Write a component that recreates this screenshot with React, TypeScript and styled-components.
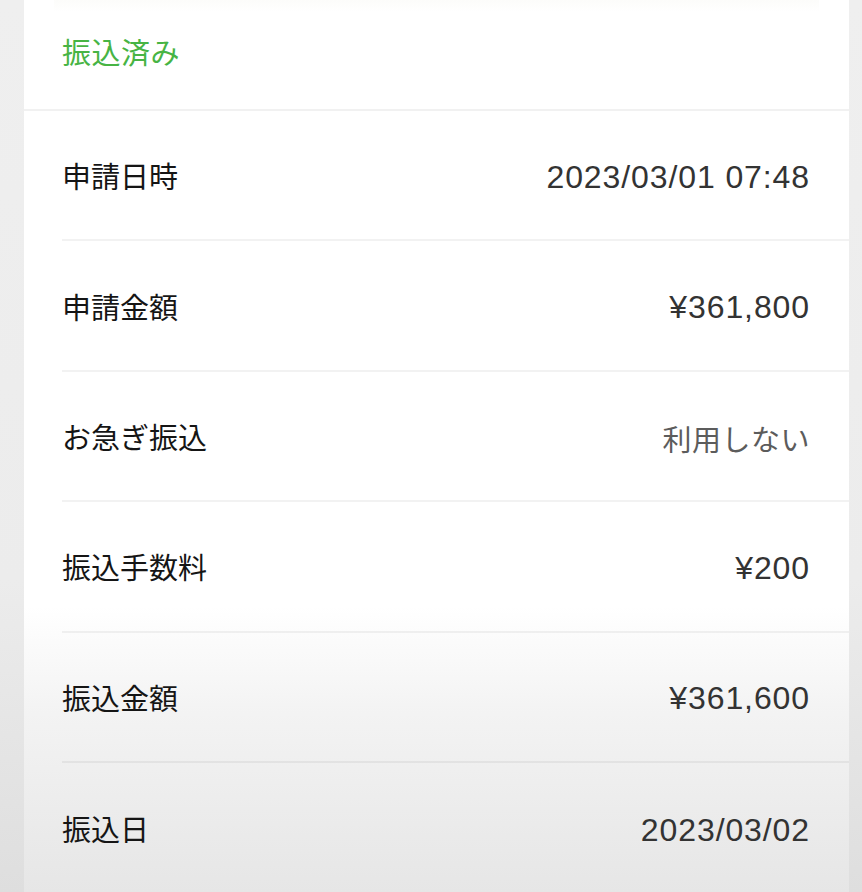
import styled, { createGlobalStyle } from 'styled-components';

const GlobalStyle = createGlobalStyle`
  html, body {
    margin: 0;
    padding: 0;
  }
  body {
    background: linear-gradient(to bottom, #efefef 0%, #ececec 65%, #dedede 100%);
    font-family: 'Noto Sans CJK JP', 'Noto Sans', sans-serif;
  }
`;

type Detail = {
  label: string;
  value: string;
  muted?: boolean;
};

const details: Detail[] = [
  { label: '申請日時', value: '2023/03/01 07:48' },
  { label: '申請金額', value: '¥361,800' },
  { label: 'お急ぎ振込', value: '利用しない', muted: true },
  { label: '振込手数料', value: '¥200' },
  { label: '振込金額', value: '¥361,600' },
  { label: '振込日', value: '2023/03/02' },
];

export default function App() {
  return (
    <>
      <GlobalStyle />
      <Page>
        <Card>
          <TopFade />
          <StatusRow>
            <Status>振込済み</Status>
          </StatusRow>
          <List>
            {details.map((item) => (
              <Row key={item.label}>
                <Label>{item.label}</Label>
                <Value $muted={item.muted}>{item.value}</Value>
              </Row>
            ))}
          </List>
        </Card>
      </Page>
    </>
  );
}

const Page = styled.div`
  width: 862px;
  height: 892px;
  overflow: hidden;
  padding-left: 24px;
  box-sizing: border-box;
`;

const Card = styled.div`
  width: 825px;
  height: 892px;
  background: linear-gradient(
    to bottom,
    #ffffff 0%,
    #ffffff 68%,
    #f3f3f3 80%,
    #e6e6e6 100%
  );
`;

const TopFade = styled.div`
  height: 12px;
  margin: 0 30px;
  background: linear-gradient(to bottom, #fcfcfa, #ffffff);
`;

const StatusRow = styled.div`
  height: 99px;
  display: flex;
  align-items: center;
  padding-left: 38px;
  padding-bottom: 20px;
  box-sizing: border-box;
  border-bottom: 2px solid #f1f1f1;
`;

const Status = styled.span`
  font-size: 29px;
  color: #47b444;
  letter-spacing: 0.5px;
`;

const List = styled.div`
  padding-left: 38px;
`;

const Row = styled.div`
  height: 130.4px;
  display: flex;
  align-items: center;
  justify-content: space-between;
  padding-right: 39px;
  border-bottom: 2px solid rgba(0, 0, 0, 0.05);
  box-sizing: border-box;

  &:last-child {
    border-bottom: none;
  }
`;

const Label = styled.span`
  font-size: 29px;
  color: #151515;
`;

const Value = styled.span<{ $muted?: boolean }>`
  font-family: 'Liberation Sans', 'Noto Sans CJK JP', sans-serif;
  font-size: ${({ $muted }) => ($muted ? '29px' : '32px')};
  letter-spacing: ${({ $muted }) => ($muted ? '0.5px' : '0.9px')};
  padding-top: 4px;
  color: ${({ $muted }) => ($muted ? '#5c5c5c' : '#333333')};
`;
